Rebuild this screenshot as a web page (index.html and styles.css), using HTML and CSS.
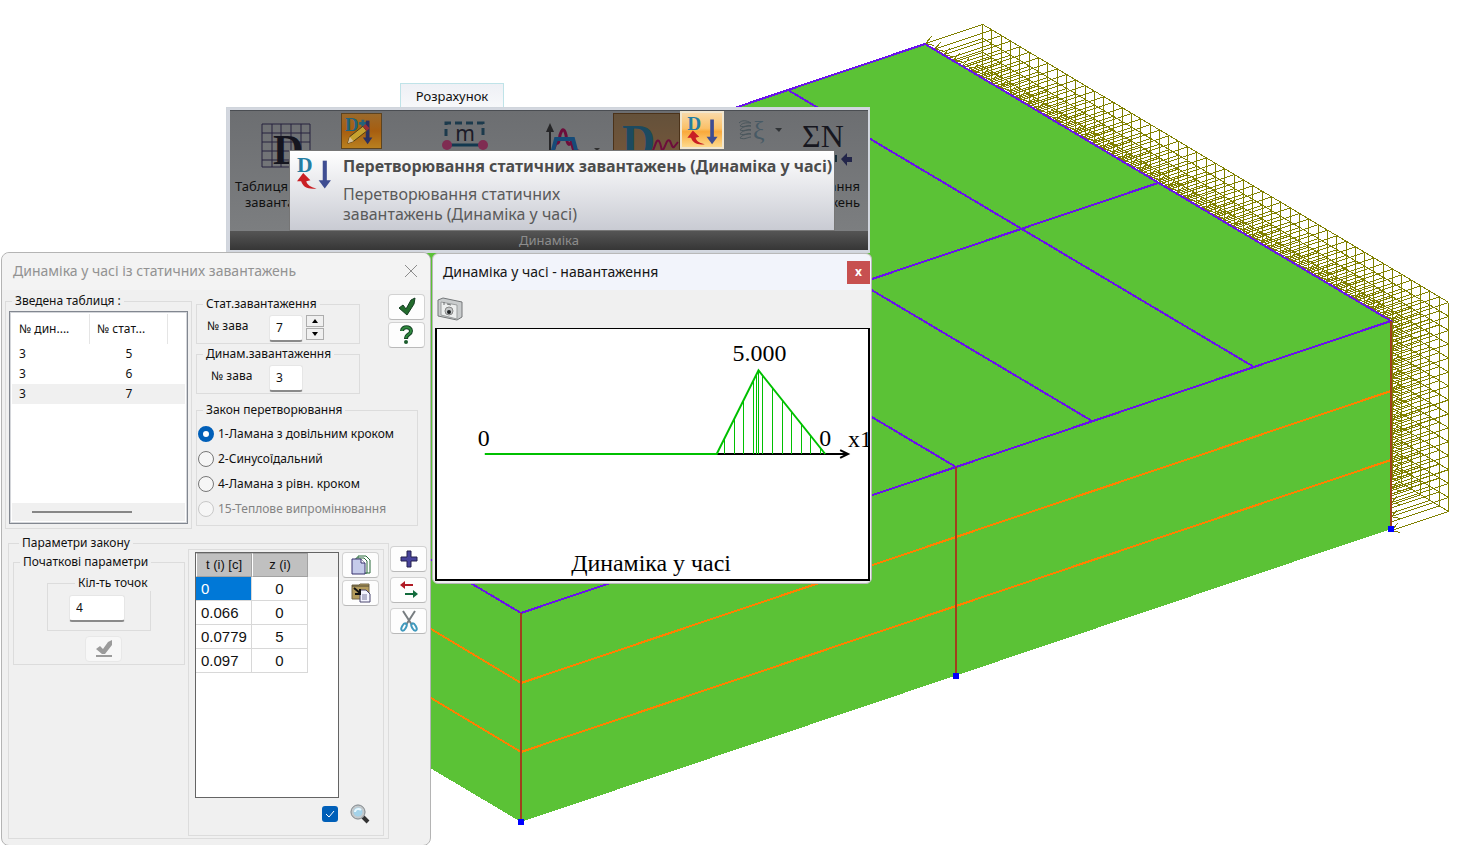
FILE: index.html
```html
<!DOCTYPE html>
<html lang="uk">
<head>
<meta charset="utf-8">
<title>Динаміка у часі</title>
<link rel="stylesheet" href="styles.css">
</head>
<body>
<main class="desktop">
  <svg class="model" viewBox="0 0 1475 845" preserveAspectRatio="xMinYMin meet" role="img" aria-label="3D-модель">
    <path id="loads" class="loads"/>
    <path class="solid" d="M925 44L1391 321V529L521 822L55 545V336Z"/>
    <path class="mesh" d="M55 336L925 44L1391 321L521 613ZM788 90L1254 367M626 144L1092 421M490 190L956 467M1158 183L440 424"/>
    <path class="layer" d="M341 575L521 683L1391 391M341 644L521 752L1391 460"/>
    <path class="column" d="M521 613V822M956 467V676M1391 321V529"/>
    <path class="node" d="M518 819h6v6h-6zM953 673h6v6h-6zM1388 526h6v6h-6z"/>
  </svg>

  <section class="ribbon">
    <button class="tab" type="button">Розрахунок</button>
    <div class="ribbon-frame">
      <div class="group">
        <button class="tool tool-table" type="button">
          <svg width="50" height="46" viewBox="0 0 50 46"><path d="M1 1h48v43H1zM1 10h48M1 19h48M1 28h48M1 37h48M11 1v43M20 1v43M30 1v43M40 1v43" fill="none" stroke="#26233f"/><text x="12" y="41" class="serif-b" font-size="42" fill="#15151f">D</text></svg>
          <span>Таблиця динам.<br>завантажень</span>
        </button>
        <button class="tool tool-edit" type="button" aria-label="Редагувати">
          <svg width="39" height="33" viewBox="0 0 41 35"><text x="3" y="18" class="serif-b" font-size="20" fill="#23637a">D</text><path d="M18 10h9M22 6v8" stroke="#23637a" stroke-width="3"/><path d="M27 7v20" stroke="#2b3161" stroke-width="4"/><path d="M22 25h10l-5 7z" fill="#2b3161"/><path d="M6 31l2-7L22 13l4 5L12 29z" fill="#c7a12f" stroke="#4c3a16"/><path d="M8 24l4 5-6 2z" fill="#d7c19a"/><path d="M22 13l3-2 4 4-3 3z" fill="#9c2f35"/></svg>
        </button>
        <button class="tool tool-mass" type="button" aria-label="Маси">
          <svg width="48" height="32" viewBox="0 0 48 32"><path d="M5 15V2h37v14" fill="none" stroke="#1c3a4c" stroke-width="3" stroke-dasharray="7 4"/><path d="M5 24h38" stroke="#12384f" stroke-width="3"/><circle cx="6" cy="24" r="5" fill="#7f2c52"/><circle cx="42" cy="24" r="5" fill="#7f2c52"/><text x="24" y="20" text-anchor="middle" class="sans" font-size="21" fill="#1b1b28">m</text></svg>
        </button>
        <button class="tool tool-graph" type="button" aria-label="Графік">
          <svg width="55" height="40" viewBox="0 0 55 40"><path d="M5 40V8" stroke="#262628" stroke-width="2"/><path d="M1 10l4-9 4 9z" fill="#262628"/><path d="M7 29c2-1 3-4 4-9 2 3 3 1 4-7 2-6 4-8 6 0 1 9 3 12 5 7 2 2 1 8 4 9 3-1 4 0 6 3" fill="none" stroke="#6d0d3b" stroke-width="3"/><path d="M7 32l4-15h17l4 15" fill="none" stroke="#164b78" stroke-width="4"/><path d="M49 26h6l-3 3z" fill="#303030"/></svg>
        </button>
        <button class="tool tool-dyn" type="button" aria-label="Динаміка">
          <svg width="65" height="44" viewBox="0 0 65 44"><text x="8" y="43" class="serif-b" font-size="46" fill="#1c4a60">D</text><path d="M38 38c3-4 4-14 7-11 3 4 2 12 4 9 3-5 4-12 7-9 2 4 2 7 4 6l4-5" fill="none" stroke="#6d0d3b" stroke-width="2"/></svg>
        </button>
        <button class="tool tool-active" type="button" aria-label="Перетворювання статичних завантажень">
          <svg width="34" height="32" viewBox="0 0 34 35"><use href="#convert"/></svg>
        </button>
        <button class="tool tool-spring" type="button" aria-label="Демпфування">
          <svg width="44" height="28" viewBox="0 0 44 28"><path d="M1 4c3-3 7-3 12 0-9-1-10 2-11 3 5 2 8-2 11 0-9 0-10 3-11 4 5 2 8-2 11 0-9 0-10 3-11 4 5 2 8-2 11 0-9 0-10 3-11 4 5 2 8-1 11-1" fill="none" stroke="#4a565c"/><text x="15" y="20" class="serif" font-size="26" fill="#485a65">ξ</text><path d="M37 9h7l-3 4z" fill="#303336"/></svg>
        </button>
        <button class="tool tool-sum" type="button">
          <svg width="52" height="46" viewBox="0 0 52 46"><text x="0" y="26" class="serif" font-size="32" fill="#17171f">ΣN</text><path d="M28 34h7v7h-7z" fill="#142c38"/><path d="M39 38l6-6v4h5v5h-5v4z" fill="#23264a"/></svg>
          <span>Перетворювання<br>завантажень</span>
        </button>
      </div>
      <div class="group-caption">Динаміка</div>
    </div>
    <div class="tooltip" role="tooltip">
      <svg width="37" height="38" viewBox="0 0 36 36">
        <g id="convert"><text x="1" y="17" class="serif-b" font-size="21" fill="#247da2">D</text><path d="M28 6v21" stroke="#3e4d92" stroke-width="4"/><path d="M22 25h12l-6 8z" fill="#3e4d92"/><path d="M1 26l6-8 7 7-4 1c1 4 5 6 10 7-8 1-13-1-15-7z" fill="#c91f24"/></g>
      </svg>
      <div class="tooltip-text">
        <strong>Перетворювання статичних завантажень (Динаміка у часі)</strong>
        <p>Перетворювання статичних<br>завантажень (Динаміка у часі)</p>
      </div>
    </div>
  </section>

  <section class="window convert-window">
    <header class="titlebar">
      <h1>Динаміка у часі із статичних завантажень</h1>
      <button class="close-plain" type="button" aria-label="Закрити"><svg width="14" height="14" viewBox="0 0 14 14"><path d="M1 1l12 12M13 1L1 13" stroke="#8c8c8c"/></svg></button>
    </header>

    <div class="upper">
      <fieldset class="summary">
        <legend>Зведена таблиця :</legend>
        <div class="listbox">
          <table class="list">
            <thead><tr><th>№ дин....</th><th>№ стат...</th><th class="filler"></th></tr></thead>
            <tbody>
              <tr><td>3</td><td>5</td><td></td></tr>
              <tr><td>3</td><td>6</td><td></td></tr>
              <tr class="selected"><td>3</td><td>7</td><td></td></tr>
            </tbody>
          </table>
          <div class="scrollbar"><div class="thumb"></div></div>
        </div>
      </fieldset>

      <div class="settings">
        <div class="settings-top">
          <div class="loads-fields">
            <fieldset>
              <legend>Стат.завантаження</legend>
              <div class="load">
                <label for="stat">№ зава</label>
                <input id="stat" class="box" type="text" value="7">
                <span class="spin">
                  <button type="button" aria-label="Більше"><svg width="6" height="4" viewBox="0 0 6 4"><path d="M0 4l3-4 3 4z"/></svg></button>
                  <button type="button" aria-label="Менше"><svg width="6" height="4" viewBox="0 0 6 4"><path d="M0 0l3 4 3-4z"/></svg></button>
                </span>
              </div>
            </fieldset>
            <fieldset>
              <legend>Динам.завантаження</legend>
              <div class="load load-dyn">
                <label for="dyn">№ зава</label>
                <input id="dyn" class="box" type="text" value="3">
              </div>
            </fieldset>
          </div>
          <div class="side">
            <button class="push" type="button" aria-label="OK"><svg width="20" height="20" viewBox="0 0 20 20"><path d="M2 11l4-3 3 4 5-9 4-2-1 6-7 11z" fill="#236b2c" stroke="#143d22"/></svg></button>
            <button class="push" type="button" aria-label="Довідка"><svg width="20" height="20" viewBox="0 0 20 20"><path d="M5 6c0-5 9-5 9 0 0 4-5 3-5 8" fill="none" stroke="#164426" stroke-width="4"/><path d="M5 6c0-5 9-5 9 0 0 4-5 3-5 7" fill="none" stroke="#2f8a3e" stroke-width="2"/><circle cx="9" cy="17" r="2" fill="#1b5c2c"/></svg></button>
          </div>
        </div>
        <fieldset class="law">
          <legend>Закон перетворювання</legend>
          <label><input type="radio" name="law" checked>1-Ламана з довільним кроком</label>
          <label><input type="radio" name="law">2-Синусоїдальний</label>
          <label><input type="radio" name="law">4-Ламана з рівн. кроком</label>
          <label class="off"><input type="radio" name="law" disabled>15-Теплове випромінювання</label>
        </fieldset>
      </div>
    </div>

    <div class="lower">
      <fieldset class="params">
        <legend>Параметри закону</legend>
        <fieldset class="initial">
          <legend>Початкові параметри</legend>
          <fieldset class="count">
            <legend><label for="points">Кіл-ть точок</label></legend>
            <input id="points" class="box" type="text" value="4">
          </fieldset>
          <button class="push push-off" type="button" disabled aria-label="Застосувати"><svg width="20" height="18" viewBox="0 0 20 18"><path d="M2 9l4-3 3 3 5-7 4-2v5l-7 9H8z" fill="#9b9b9b"/><path d="M2 16h16" stroke="#9b9b9b" stroke-width="2"/></svg></button>
        </fieldset>
        <div class="points">
          <div class="points-row">
            <div class="gridbox">
              <table class="values">
                <thead><tr><th>t (i) [c]</th><th>z (i)</th><th class="rest"></th></tr></thead>
                <tbody>
                  <tr><td class="current">0</td><td>0</td></tr>
                  <tr><td>0.066</td><td>0</td></tr>
                  <tr><td>0.0779</td><td>5</td></tr>
                  <tr><td>0.097</td><td>0</td></tr>
                </tbody>
              </table>
            </div>
            <div class="side">
              <button class="push" type="button" aria-label="Копіювати"><svg width="20" height="20" viewBox="0 0 20 20"><path d="M7 1h8l4 4v13H7z" fill="#fff" stroke="#286a3a"/><path d="M5 3h8l3 3v12H5z" fill="#fff" stroke="#286a3a"/><path d="M1 4h9l4 4v11H1z" fill="#c5cbea" stroke="#38336f"/><path d="M10 4v4h4" fill="#fff" stroke="#38336f"/></svg></button>
              <button class="push" type="button" aria-label="Вставити"><svg width="20" height="20" viewBox="0 0 20 20"><path d="M1 2h7l1-1h9v15H1z" fill="#b39b5c" stroke="#75694a"/><path d="M1 3h17" stroke="#4c4633"/><path d="M9 7h6l4 4v8H9z" fill="#f5f5ff" stroke="#4a466f"/><path d="M11 12h5M11 14h5M11 16h5" stroke="#77769c"/><path d="M3 5l6 5M9 6v5H4" fill="none" stroke="#111" stroke-width="2"/></svg></button>
            </div>
          </div>
          <div class="points-foot">
            <input type="checkbox" checked aria-label="Показати">
            <svg width="20" height="20" viewBox="0 0 20 20"><path d="M12 12l6 6" stroke="#333" stroke-width="4"/><circle cx="8" cy="8" r="6" fill="#a4d3ea" stroke="#c4c9cc" stroke-width="3"/><circle cx="8" cy="8" r="7" fill="none" stroke="#888e92" stroke-width="1"/><path d="M5 8c0-3 4-4 6-2" fill="none" stroke="#e8f8ff" stroke-width="2"/></svg>
          </div>
        </div>
      </fieldset>
      <div class="side side-wide">
        <button class="push" type="button" aria-label="Додати"><svg width="20" height="20" viewBox="0 0 20 20"><path d="M8 2h4v6h6v4h-6v6H8v-6H2V8h6z" fill="#47439a" stroke="#25204f"/></svg></button>
        <button class="push" type="button" aria-label="Замінити"><svg width="20" height="20" viewBox="0 0 20 20"><path d="M4 5h10" stroke="#b01a24" stroke-width="2"/><path d="M1 5l5-4v8z" fill="#b01a24"/><path d="M6 14h10" stroke="#126b3c" stroke-width="2"/><path d="M19 14l-5-4v8z" fill="#126b3c"/></svg></button>
        <button class="push" type="button" aria-label="Вирізати"><svg width="20" height="22" viewBox="0 0 20 22"><path d="M4 1l9 14M16 1L7 15" stroke="#777d80" stroke-width="2"/><ellipse cx="5" cy="17" rx="2" ry="4" transform="rotate(30 5 17)" fill="none" stroke="#4099bd" stroke-width="2"/><ellipse cx="15" cy="17" rx="2" ry="4" transform="rotate(-30 15 17)" fill="none" stroke="#4099bd" stroke-width="2"/></svg></button>
      </div>
    </div>
  </section>

  <section class="window chart-window">
    <header class="titlebar titlebar-chart">
      <h2>Динаміка у часі - навантаження</h2>
      <button class="close-red" type="button">x</button>
    </header>
    <div class="toolbar">
      <button type="button" aria-label="Знімок"><svg width="26" height="24" viewBox="0 0 26 24"><path d="M1 3l5-2 19 4v15l-5 3L1 19z" fill="#c9cccd" stroke="#747779" stroke-width="1"/><path d="M4 5l16 3v14L4 18z" fill="#eceeee" stroke="#9a9d9e"/><circle cx="12" cy="14" r="4" fill="#c4c7c8" stroke="#888"/><circle cx="12" cy="15" r="2" fill="#202325"/><path d="M7 5v3M10 7l4 1" stroke="#6c6f70"/></svg></button>
    </div>
    <svg class="chart" viewBox="436 329 433 250" role="img" aria-label="Динаміка у часі">
      <path d="M716 454H842" stroke="#000" stroke-width="2"/>
      <path d="M841 450l8 4-8 4M841 454h8" fill="none" stroke="#000" stroke-width="2"/>
      <path class="ticks" d="M725 454V437M735 454V419M744 454V400M754 454V381M757 454V374M759 454V370M763 454V375M773 454V387M783 454V400M792 454V411M802 454V423M811 454V435M821 454V448"/>
      <path d="M484 454H717L759 370L826 454" class="curve"/>
      <text x="477" y="446">0</text>
      <text x="733" y="361">5.000</text>
      <text x="820" y="446">0</text>
      <text x="849" y="447">x1</text>
      <text x="651" y="572" text-anchor="middle">Динаміка у часі</text>
    </svg>
  </section>
</main>
<script src="model.js"></script>
</body>
</html>
```
FILE: styles.css
```css
* { box-sizing: border-box; }
body { margin: 0; background: #fff; color: #111; font: 12px/16px "Noto Sans", "Open Sans", sans-serif; }
button, input { font: inherit; color: inherit; }
button { padding: 0; border: 0; background: none; }
h1, h2, p { margin: 0; font-weight: 400; }
svg { display: block; flex: none; }
.serif { font-family: "Liberation Serif", serif; }
.serif-b { font-family: "Liberation Serif", serif; font-weight: 700; }
.sans { font-family: "Noto Sans", sans-serif; }

.desktop { position: relative; height: 100vh; overflow: hidden; }
.model { width: 100%; height: 100%; }
.model path { fill: none; stroke-width: 2; shape-rendering: crispEdges; }
.model .loads { stroke: #808000; stroke-width: 1; }
.model .solid { fill: #5bc236; }
.mesh { stroke: #6a12ea; }
.layer { stroke: #ff8000; }
.column { stroke: #a0401c; }
.model .node { fill: #0000ff; }

.ribbon { position: absolute; left: 226px; top: 83px; width: 644px; display: flex; flex-direction: column; font-size: 13px; }
.tab { align-self: flex-start; margin-left: 174px; width: 104px; height: 24px; border: 1px solid #bfe3e8; border-bottom: 0; background: linear-gradient(#eef0f5, #f7f8fa); }
.ribbon-frame { padding: 2px 1px 2px 3px; border: 1px solid #d0d5dc; background: #d3d7df; }
.group { display: flex; align-items: flex-start; height: 121px; background: linear-gradient(#6c6e71, #7c7e80); border-top: 1px solid #4a4d52; }
.group-caption { height: 19px; line-height: 19px; text-align: center; color: #8d8d8d; background: linear-gradient(#555, #363636); }
.tool { flex: none; display: flex; flex-direction: column; line-height: 16px; }
.tool-table { width: 111px; padding-top: 12px; align-items: center; text-align: center; white-space: nowrap; }
.tool-table svg { margin-bottom: 9px; }
.tool-edit { width: 41px; height: 36px; margin-top: 2px; border: 1px solid #5d431f; background: linear-gradient(#9b6a2c, #a75e10 50%, #b9801f); }
.tool-mass { margin: 10px 0 0 59px; }
.tool-graph { margin: 11px 0 0 56px; }
.tool-dyn { margin: 2px 0 0 13px; width: 67px; border: 1px solid #4b3219; background: linear-gradient(#64513a, #74563a); }
.tool-active { width: 44px; height: 38px; align-items: center; justify-content: center; border: 2px solid #f1e6cf; background: linear-gradient(#f9d9a8, #fbc168 45%, #f9a93b 55%, #fdd98c); }
.tool-spring { margin: 8px 0 0 14px; }
.tool-sum { flex: 1; min-width: 0; padding: 10px 8px 0 20px; text-align: right; align-items: flex-end; }
.tool-sum svg { align-self: flex-start; margin-bottom: 11px; }
.tooltip { position: absolute; left: 63px; top: 67px; width: 546px; height: 81px; padding: 3px 0 3px 6px; display: flex; gap: 10px; border: 1px solid #767676; background: linear-gradient(#fff, #c9cbd3); color: #4c4c4c; font-size: 16px; line-height: 20px; white-space: nowrap; }
.tooltip strong { display: block; line-height: 24px; }
.tooltip p { padding-top: 6px; color: #5a5a5a; line-height: 20px; }

.window { position: absolute; background: #f0f0f0; }
.convert-window { left: 1px; top: 252px; width: 430px; height: 594px; border: 1px solid #b4b4b4; border-radius: 8px; }
.titlebar { display: flex; align-items: center; justify-content: space-between; height: 37px; padding: 0 12px 2px 11px; background: #f3f3f3; border-radius: 8px 8px 0 0; color: #929292; }
.titlebar h1, .titlebar h2 { font-size: 14px; line-height: 18px; }
fieldset { margin: 0; padding: 0; border: 1px solid #dcdcdc; min-width: 0; }
legend { padding: 0 3px; margin-left: 6px; line-height: 16px; white-space: nowrap; }
.upper { display: flex; gap: 4px; padding: 3px 5px 0 3px; }
.summary { width: 187px; height: 236px; padding: 2px 3px 3px; }
.summary legend { margin-left: 3px; }
.listbox { height: 213px; border: 1px solid #828790; outline: 1px solid #d4d6da; outline-offset: -2px; background: #fff; padding: 2px; display: flex; flex-direction: column; justify-content: space-between; }
.list { border-collapse: separate; border-spacing: 0; table-layout: fixed; width: 100%; }
.list th { width: 78px; height: 30px; padding: 0 0 0 7px; text-align: left; font-weight: 400; border-right: 1px solid #e5e5e5; white-space: nowrap; }
.list .filler { width: auto; border: 0; padding: 0; }
.list td { height: 20px; padding: 0 0 0 7px; line-height: 20px; }
.list td:nth-child(2) { text-align: center; padding: 0; }
.selected { background: #f0f0f0; }
.scrollbar { height: 18px; padding: 8px 53px 0 20px; background: #f0f0f0; }
.thumb { height: 2px; background: #868686; }

.settings { flex: 1; display: flex; flex-direction: column; gap: 8px; padding-top: 3px; }
.settings-top { display: flex; justify-content: space-between; }
.loads-fields { display: flex; flex-direction: column; gap: 2px; width: 164px; }
.loads-fields fieldset { height: 48px; }
.load { display: flex; align-items: flex-start; padding: 3px 0 0 10px; }
.load label { width: 62px; padding-top: 3px; }
.load-dyn { padding-left: 14px; }
.load-dyn label { width: 58px; }
.box { width: 34px; height: 27px; padding: 0 0 2px 6px; border: 1px solid #e6e6e6; border-bottom: 2px solid #8a8a8a; border-radius: 3px; background: #fff; }
.spin { display: flex; flex-direction: column; gap: 1px; margin-left: 3px; }
.spin button { width: 18px; height: 12px; border: 1px solid #adadad; display: flex; align-items: center; justify-content: center; }
.side { display: flex; flex-direction: column; gap: 2px; }
.settings-top .side { margin-top: -2px; }
.push { width: 37px; height: 26px; display: flex; align-items: center; justify-content: center; border: 1px solid #d2d2d2; border-bottom-color: #b9b9b9; border-radius: 4px; background: #fdfdfd; }
.push-off { border-color: #e8e8e8; background: #f7f7f7; }
.law { width: 222px; height: 124px; padding-top: 3px; }
.law label { display: flex; align-items: center; gap: 4px; height: 25px; padding-left: 1px; white-space: nowrap; }
.law .off { color: #838383; }
input[type="radio"] { appearance: none; width: 16px; height: 16px; margin: 0; border: 1px solid #777; border-radius: 50%; background: #f6f6f6; }
input[type="radio"]:checked { border: 5px solid #005fb8; background: #fff; }
input[type="radio"]:disabled { border-color: #c8c8c8; }

.lower { display: flex; gap: 1px; padding: 6px 3px 0 6px; }
.params { flex: 1; height: 304px; display: flex; align-items: flex-start; gap: 3px; padding: 3px 4px; }
.initial { width: 173px; height: 111px; padding-top: 5px; }
.count { width: 104px; height: 56px; margin: 0 auto 5px; padding: 4px 21px; }
.count .box { width: 56px; }
.initial .push { margin-left: 71px; }
.points { flex: 1; margin-top: -5px; height: 287px; border: 1px solid #dcdcdc; padding: 2px 4px 2px 6px; }
.points-row { display: flex; gap: 3px; }
.gridbox { width: 144px; height: 246px; border: 1px solid #646464; background: #fff; }
.values { border-collapse: separate; border-spacing: 0; width: 100%; table-layout: fixed; font: 15px/22px "Liberation Sans", Arial, sans-serif; }
.values th { width: 56px; height: 24px; padding: 0; font-size: 13px; font-weight: 400; background: #c0c0c0; border: 1px solid #a2a2a2; border-left-color: #fff; }
.values .rest { width: auto; background: #f0f0f0; border: 0; }
.values td { height: 24px; padding: 0 0 0 5px; border-right: 1px solid #d8d8d8; border-bottom: 1px solid #d8d8d8; }
.values td:nth-child(2) { text-align: center; padding: 0; }
.values .current { background: #0078d7; color: #fff; }
.points-foot { display: flex; align-items: center; justify-content: flex-end; gap: 12px; padding: 6px 9px 0 0; }
input[type="checkbox"] { appearance: none; width: 16px; height: 16px; margin: 0; border-radius: 3px; background: #005fb8 url("data:image/svg+xml,%3Csvg xmlns='http://www.w3.org/2000/svg' viewBox='0 0 16 16'%3E%3Cpath d='M4 8l3 3 5-6' fill='none' stroke='white'/%3E%3C/svg%3E"); }
.side-wide { gap: 5px; padding-top: 11px; }

.chart-window { left: 432px; top: 253px; width: 440px; height: 331px; border: 1px solid #b8b8b8; border-radius: 6px; display: flex; flex-direction: column; padding: 0 1px 2px 2px; }
.titlebar-chart { margin: 0 -1px 0 -2px; height: 36px; padding: 0 1px 0 10px; background: #f2f4fb; color: #151515; }
.close-red { width: 23px; height: 23px; background: #c75050; color: #fff; font-weight: 700; }
.toolbar { height: 38px; padding: 7px 2px; }
.chart { flex: 1; min-height: 0; width: 100%; border: 2px solid #000; border-top-width: 1px; background: #fff; }
.chart text { font: 24px "Liberation Serif", serif; fill: #000; }
.curve { fill: none; stroke: #00c000; stroke-width: 2; }
.ticks { stroke: #00c000; stroke-width: 1; shape-rendering: crispEdges; }
```
FILE: model.js
```js
// Distributed load on the far face: an outer grid with an arrow from each grid node to the wall.
(function () {
  var cols = 50, rows = 15;
  var x0 = 982, y0 = 24, dx = 466, dy = 278, h = 209;
  var d = "";
  function line(a, b, c, e) { d += "M" + a.toFixed(1) + " " + b.toFixed(1) + "L" + c.toFixed(1) + " " + e.toFixed(1); }
  for (var i = 0; i <= cols; i++) {
    var x = x0 + dx * i / cols + 0.5, y = y0 + dy * i / cols + 0.5;
    line(x, y, x, y + h);
    for (var j = 0; j <= rows; j++) {
      var v = y + h * j / rows;
      line(x, v, x - 57, v + 19);
      line(x - 57, v + 19, x - 51, v + 12);
      line(x - 57, v + 19, x - 48, v + 21);
    }
  }
  for (var r = 0; r <= rows; r++) {
    line(x0, y0 + h * r / rows, x0 + dx, y0 + dy + h * r / rows);
  }
  document.getElementById("loads").setAttribute("d", d);
})();
```
